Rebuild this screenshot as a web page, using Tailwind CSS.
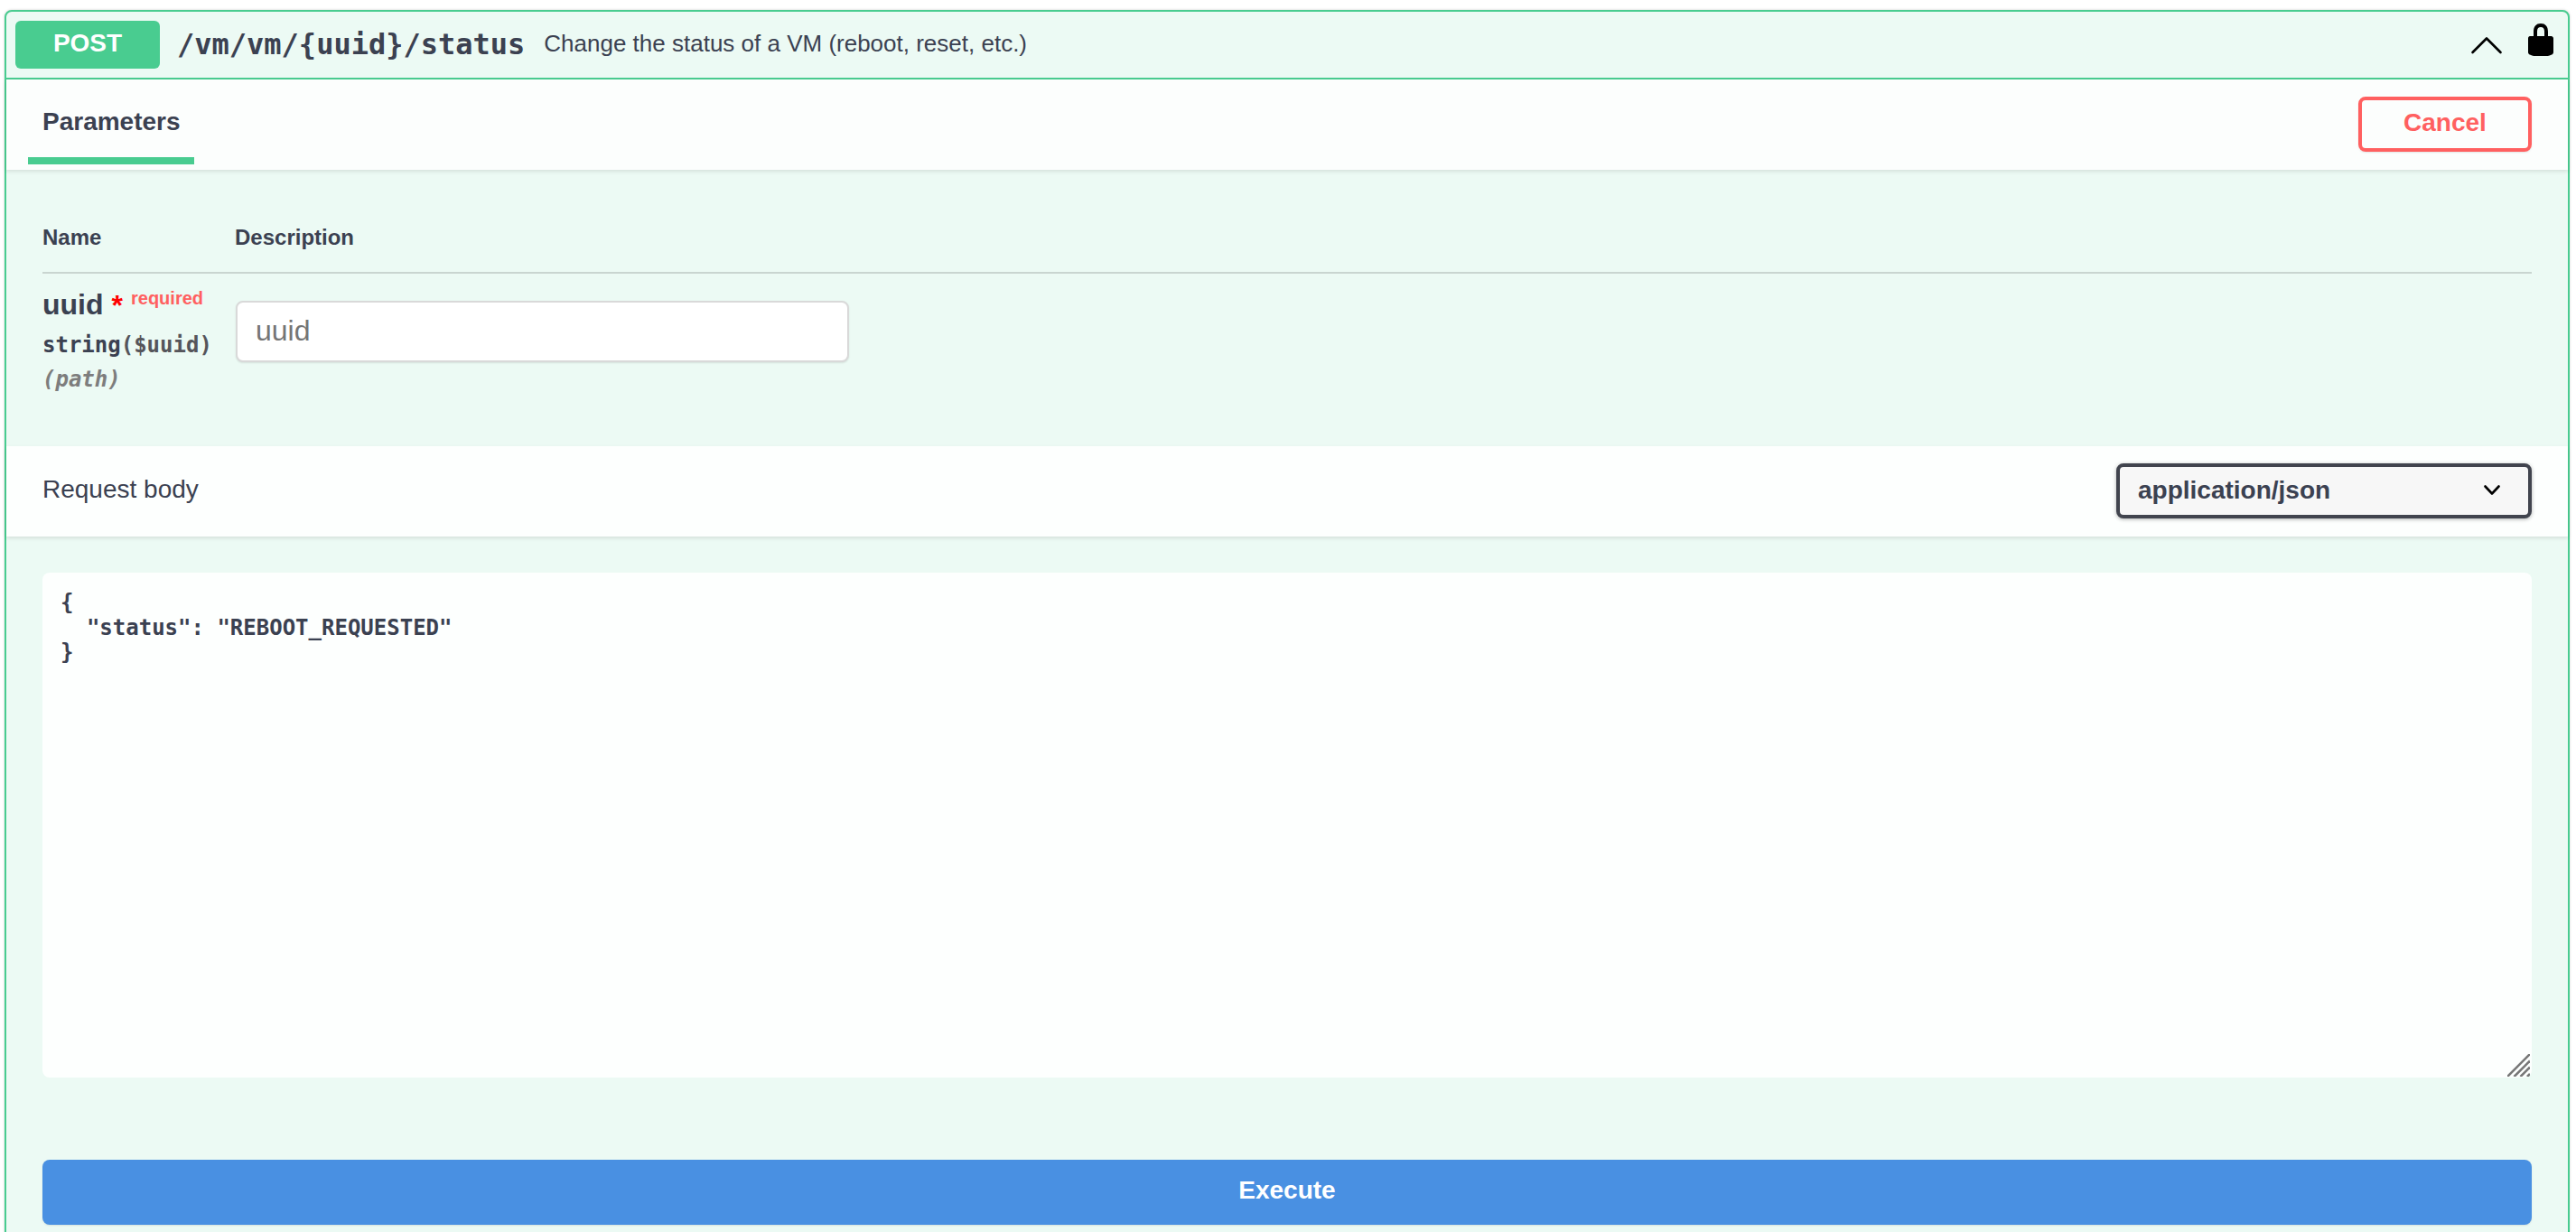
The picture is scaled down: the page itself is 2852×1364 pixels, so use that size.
<!DOCTYPE html>
<html lang="en">
<head>
  <meta charset="UTF-8" />
  <title>POST /vm/vm/{uuid}/status</title>
  <script src="https://cdn.jsdelivr.net/npm/@tailwindcss/browser@4"></script>
</head>
<body class="bg-white h-screen overflow-hidden text-[#3b4151] font-['Liberation_Sans',Arial,sans-serif]">
  <div class="ml-[5px] mr-[7px] pt-[11px] h-screen">
    <div class="h-[1400px] border-2 border-[#49cc90] rounded-lg bg-[#ecfaf4] shadow-[0_0_3px_rgba(0,0,0,0.19)]">

      <!-- summary -->
      <div class="h-[75px] flex items-center border-b-2 border-[#49cc90] pl-[10px] pr-[10px]">
        <div class="w-[160px] h-[53px] pb-[3px] rounded-md bg-[#49cc90] text-white text-[28px] font-bold flex items-center justify-center">POST</div>
        <div class="ml-[19px] mb-[2px] text-[32px] font-bold font-['DejaVu_Sans_Mono',monospace]">/vm/vm/{uuid}/status</div>
        <div class="ml-[21px] mb-[2px] text-[26px]">Change the status of a VM (reboot, reset, etc.)</div>
        <svg class="ml-auto w-[40px] h-[24px]" viewBox="0 0 40 24" fill="none" stroke="#000" stroke-width="2.6" stroke-linecap="round" stroke-linejoin="round">
          <polyline points="4.5,20 20,4.5 35.5,20" />
        </svg>
        <svg class="ml-[20px] mb-[11px] w-[40px] h-[40px]" viewBox="0 0 20 20" fill="#000">
          <path d="M15.8 8H14V5.6C14 2.703 12.665 1 10 1 7.334 1 6 2.703 6 5.6V8H4c-.553 0-1 .646-1 1.199V17c0 .549.428 1.139.951 1.307l1.197.387C5.672 18.861 6.55 19 7.1 19h5.8c.549 0 1.428-.139 1.951-.307l1.196-.387c.524-.167.953-.757.953-1.306V9.199C17 8.646 16.352 8 15.8 8zM12 8H8V5.199C8 3.754 8.797 3 10 3c1.203 0 2 .754 2 2.199V8z" />
        </svg>
      </div>

      <!-- parameters header -->
      <div class="h-[100px] flex items-center justify-between pr-[40px] bg-[#fcfefd] shadow-[0_2px_4px_rgba(0,0,0,0.1)]">
        <div class="self-start ml-[24px] w-[184px] pl-[16px] pt-[8px] h-[94px] flex items-center border-b-8 border-[#49cc90] text-[28px] font-bold">Parameters</div>
        <button class="w-[192px] h-[61px] pb-[3px] -mt-[2px] rounded-lg border-4 border-[#ff6060] text-[#ff6060] text-[28px] font-bold shadow-[0_1px_2px_rgba(0,0,0,0.1)]">Cancel</button>
      </div>

      <!-- parameters table -->
      <div class="h-[306px] px-[40px]">
        <div class="pt-[60px] pb-[23px] flex border-b-2 border-[#c9d5d0] text-[24px] leading-[30px] font-bold">
          <div class="w-[213px]">Name</div>
          <div>Description</div>
        </div>
        <div class="flex">
          <div class="w-[214px] pt-[16px]">
            <div class="flex h-[36px] items-center">
              <span class="text-[32px] font-bold">uuid</span>
              <span class="ml-[9px] text-[32px] font-bold text-[#ff0000] mt-[2px]">*</span>
              <span class="ml-[9px] text-[20px] font-bold text-[#ff6060] mb-[14px]">required</span>
            </div>
            <div class="mt-[12px] text-[24px] leading-[30px] font-bold font-['DejaVu_Sans_Mono',monospace]">string<span class="text-[#55555b]">($uuid)</span></div>
            <div class="mt-[8px] text-[24px] leading-[30px] font-bold italic text-[#7d7d7d] font-['DejaVu_Sans_Mono',monospace]">(path)</div>
          </div>
          <input class="mt-[30px] w-[679px] h-[68px] px-[20px] pb-[2px] bg-white rounded-lg border-2 border-[#d9d9d9] text-[32px] placeholder:text-[#757575] shadow-[0_1px_2px_rgba(0,0,0,0.1)]" placeholder="uuid" />
        </div>
      </div>

      <!-- request body header -->
      <div class="h-[100px] flex items-center justify-between px-[40px] bg-[#fdfffe] shadow-[0_2px_4px_rgba(0,0,0,0.1)]">
        <div class="text-[28px] mb-[5px]">Request body</div>
        <div class="w-[460px] h-[61px] pl-[20px] pr-[31px] mb-[2px] flex items-center justify-between rounded-lg border-4 border-[#41444e] bg-[#f7f7f7] text-[28px] font-bold shadow-[0_1px_4px_rgba(0,0,0,0.3)]">
          <span>application/json</span>
          <svg class="w-[18px] h-[12px]" viewBox="0 0 18 12" fill="none" stroke="#000" stroke-width="2.6" stroke-linecap="round" stroke-linejoin="round">
            <polyline points="1.5,1.5 9,9.5 16.5,1.5" />
          </svg>
        </div>
      </div>

      <!-- body editor -->
      <div class="px-[40px] pt-[40px]">
        <div class="relative h-[559px]">
          <textarea class="block w-full h-full resize-none rounded-lg bg-[#fdfffe] pt-[20px] pl-[20px] text-[24px] leading-[27.5px] font-bold outline-none font-['DejaVu_Sans_Mono',monospace]">{
  "status": "REBOOT_REQUESTED"
}</textarea>
          <svg class="absolute right-[2px] bottom-[1px] w-[25px] h-[25px] pointer-events-none" viewBox="0 0 25 25" stroke="#777" stroke-width="2.6">
            <line x1="0" y1="25" x2="25" y2="0" />
            <line x1="7.5" y1="25" x2="25" y2="7.5" />
            <line x1="14.5" y1="25" x2="25" y2="14.5" />
            <line x1="22" y1="25" x2="25" y2="22" />
          </svg>
        </div>
        <button class="block mt-[91px] w-full h-[72px] pb-[5px] rounded-lg bg-[#4990e2] text-white text-[28px] font-bold shadow-[0_1px_2px_rgba(0,0,0,0.1)]">Execute</button>
      </div>
    </div>
  </div>
</body>
</html>
